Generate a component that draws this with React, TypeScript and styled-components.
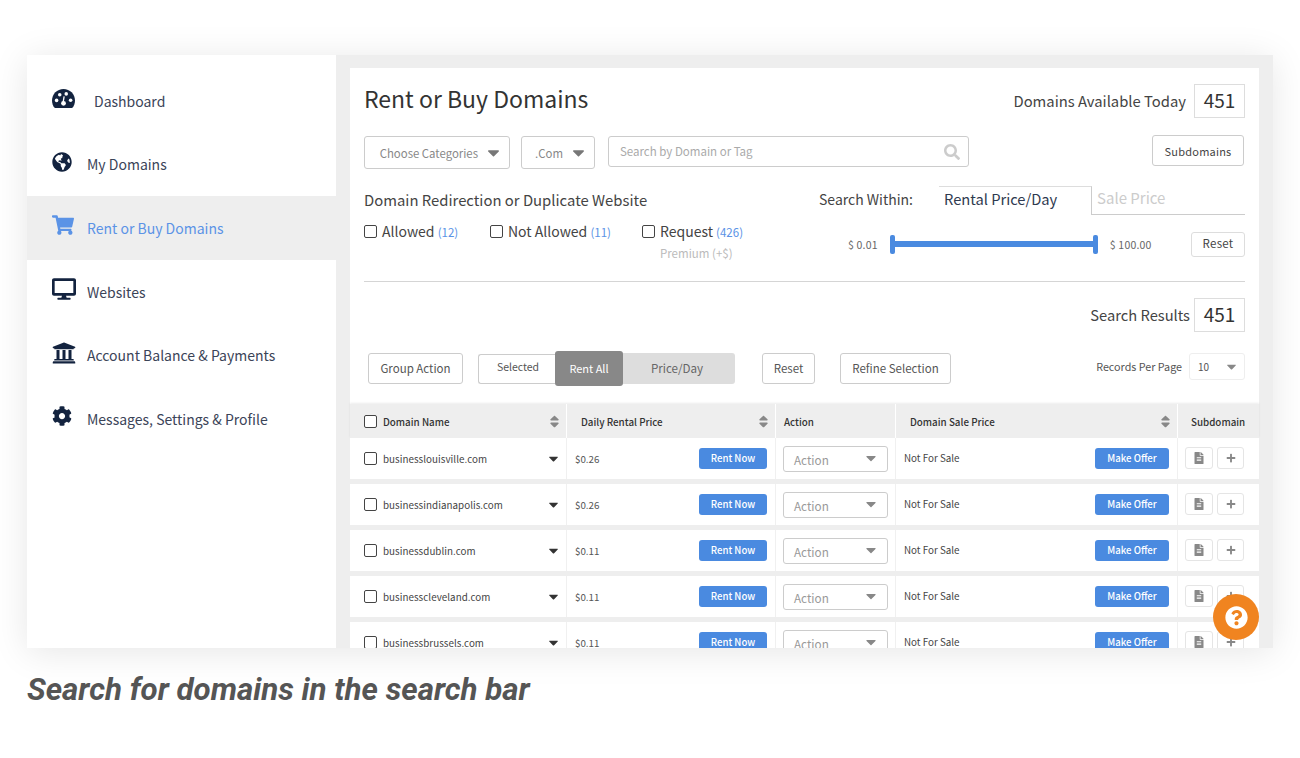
import styled, { createGlobalStyle } from "styled-components";
import {
  FaGlobeAmericas,
  FaShoppingCart,
  FaDesktop,
  FaUniversity,
  FaCog,
  FaSearch,
  FaFileAlt,
  FaPlus,
  FaQuestionCircle,
  FaCaretDown,
  FaSort,
} from "react-icons/fa";

const ui = '"Noto Sans CJK SC", "Open Sans", sans-serif';

const GlobalStyle = createGlobalStyle`
  html, body {
    margin: 0;
    background: #fff;
    overflow: hidden;
  }
  body {
    font-family: ${ui};
    color: #444;
  }
  * { box-sizing: border-box; }
`;

function GaugeIcon() {
  return (
    <svg width="23" height="19" viewBox="0 0 22 18" fill="currentColor">
      <path d="M11 0C4.9 0 0 4.9 0 11c0 2.6.9 5 2.4 6.9.2.1.4.1.6.1h16c.2 0 .4 0 .6-.1C21.1 16 22 13.6 22 11 22 4.9 17.1 0 11 0z" />
      <g fill="#fff">
        <circle cx="4.4" cy="10.8" r="1.7" />
        <circle cx="7.4" cy="5.4" r="1.7" />
        <circle cx="13.6" cy="4.6" r="1.7" />
        <circle cx="17.8" cy="10.6" r="1.7" />
        <circle cx="11" cy="13.6" r="2.3" />
        <path d="M9.9 13.2l1.1-6.4 1.2.2-1 6.4z" />
      </g>
    </svg>
  );
}

const navItems = [
  { label: "Dashboard", icon: <GaugeIcon />, wide: true },
  { label: "My Domains", icon: <FaGlobeAmericas size={20} /> },
  { label: "Rent or Buy Domains", icon: <FaShoppingCart size={22} />, active: true },
  { label: "Websites", icon: <FaDesktop size={24} /> },
  { label: "Account Balance & Payments", icon: <FaUniversity size={24} /> },
  { label: "Messages, Settings & Profile", icon: <FaCog size={20} /> },
];

const domains = [
  { name: "businesslouisville.com", price: "$0.26" },
  { name: "businessindianapolis.com", price: "$0.26" },
  { name: "businessdublin.com", price: "$0.11" },
  { name: "businesscleveland.com", price: "$0.11" },
  { name: "businessbrussels.com", price: "$0.11" },
];

export default function App() {
  return (
    <>
      <GlobalStyle />
      <Page>
        <Frame>
          <Sidebar>
            {navItems.map((item) => (
              <NavRow key={item.label} $active={item.active}>
                <NavIcon $active={item.active}>{item.icon}</NavIcon>
                <NavLabel $wide={item.wide}>{item.label}</NavLabel>
              </NavRow>
            ))}
          </Sidebar>
          <Main>
            <Panel>
              <Body>
                <TitleRow>
                  <Title>Rent or Buy Domains</Title>
                  <CountGroup>
                    <CountLabel>Domains Available Today</CountLabel>
                    <CountBox>451</CountBox>
                  </CountGroup>
                </TitleRow>

                <FilterRow>
                  <FilterSelect $width={146}>
                    Choose Categories <FaCaretDown />
                  </FilterSelect>
                  <FilterSelect $width={74}>
                    .Com <FaCaretDown />
                  </FilterSelect>
                  <SearchBox>
                    Search by Domain or Tag
                    <FaSearch />
                  </SearchBox>
                  <SubdomainsButton>Subdomains</SubdomainsButton>
                </FilterRow>

                <Options>
                  <div>
                    <OptionsTitle>Domain Redirection or Duplicate Website</OptionsTitle>
                    <Checks>
                      <CheckItem $width={126}>
                        <CheckBox />
                        <span>
                          Allowed <Count>(12)</Count>
                        </span>
                      </CheckItem>
                      <CheckItem $width={152}>
                        <CheckBox />
                        <span>
                          Not Allowed <Count>(11)</Count>
                        </span>
                      </CheckItem>
                      <CheckItem>
                        <CheckBox />
                        <span>
                          Request <Count>(426)</Count>
                          <Premium>Premium (+$)</Premium>
                        </span>
                      </CheckItem>
                    </Checks>
                  </div>
                  <div>
                    <Tabs>
                      <WithinLabel>Search Within:</WithinLabel>
                      <ActiveTab>Rental Price/Day</ActiveTab>
                      <IdleTab>Sale Price</IdleTab>
                    </Tabs>
                    <SliderRow>
                      <SliderValue>$ 0.01</SliderValue>
                      <Slider />
                      <SliderValue>$ 100.00</SliderValue>
                      <SmallButton>Reset</SmallButton>
                    </SliderRow>
                  </div>
                </Options>

                <Divider />

                <ResultsRow>
                  <ResultsLabel>Search Results</ResultsLabel>
                  <CountBox>451</CountBox>
                </ResultsRow>

                <Toolbar>
                  <ToolButton $width={95}>Group Action</ToolButton>
                  <Toggle>
                    <ToggleSelected>Selected</ToggleSelected>
                    <ToggleActive>Rent All</ToggleActive>
                    <ToggleRest>Price/Day</ToggleRest>
                  </Toggle>
                  <ToolButton $width={53}>Reset</ToolButton>
                  <ToolButton $width={111}>Refine Selection</ToolButton>
                  <Records>
                    Records Per Page
                    <RecordsSelect>
                      10 <FaCaretDown />
                    </RecordsSelect>
                  </Records>
                </Toolbar>
              </Body>

              <Table>
                <HeadRow>
                  <HeadCell>
                    <CheckBox />
                    <HeadText>Domain Name</HeadText>
                    <SortIcon />
                  </HeadCell>
                  <HeadCell>
                    <HeadText>Daily Rental Price</HeadText>
                    <SortIcon />
                  </HeadCell>
                  <HeadCell $pad={8}>
                    <HeadText>Action</HeadText>
                  </HeadCell>
                  <HeadCell>
                    <HeadText>Domain Sale Price</HeadText>
                    <SortIcon />
                  </HeadCell>
                  <HeadCell $pad={13}>
                    <HeadText>Subdomain</HeadText>
                  </HeadCell>
                </HeadRow>
                {domains.map((d) => (
                  <Row key={d.name}>
                    <Cell>
                      <CheckBox />
                      <DomainName>{d.name}</DomainName>
                      <RowCaret />
                    </Cell>
                    <Cell $pad={8}>
                      <Price>{d.price}</Price>
                      <BlueButton>Rent Now</BlueButton>
                    </Cell>
                    <Cell $pad={7}>
                      <ActionSelect>
                        Action <FaCaretDown />
                      </ActionSelect>
                    </Cell>
                    <Cell $pad={8}>
                      <SaleText>Not For Sale</SaleText>
                      <BlueButton $width={74}>Make Offer</BlueButton>
                    </Cell>
                    <Cell $pad={7}>
                      <IconButton>
                        <FaFileAlt />
                      </IconButton>
                      <IconButton $narrow>
                        <FaPlus />
                      </IconButton>
                    </Cell>
                  </Row>
                ))}
              </Table>
            </Panel>
          </Main>
          <HelpBubble>
            <FaQuestionCircle />
          </HelpBubble>
        </Frame>
        <Caption>Search for domains in the search bar</Caption>
      </Page>
    </>
  );
}

const Page = styled.div`
  width: 1300px;
  height: 758px;
  padding: 55px 27px 0;
`;

const Frame = styled.div`
  position: relative;
  display: flex;
  width: 1246px;
  height: 593px;
  box-shadow: 0 4px 34px rgba(0, 0, 0, 0.1);
`;

const Sidebar = styled.nav`
  width: 309px;
  flex-shrink: 0;
  padding-top: 14px;
  background: #fff;
`;

const NavRow = styled.div<{ $active?: boolean }>`
  display: flex;
  align-items: center;
  height: 63.6px;
  padding-left: 25px;
  background: ${(p) => (p.$active ? "#eeeeee" : "transparent")};
  color: ${(p) => (p.$active ? "#5b93e6" : "#3b4458")};
`;

const NavIcon = styled.span<{ $active?: boolean }>`
  display: flex;
  width: 35px;
  margin-top: -5px;
  color: ${(p) => (p.$active ? "#5b93e6" : "#13233f")};
  svg {
    display: block;
  }
`;

const NavLabel = styled.span<{ $wide?: boolean }>`
  font-size: 14px;
  margin-left: ${(p) => (p.$wide ? "7px" : "0")};
`;

const Main = styled.div`
  flex: 1;
  height: 100%;
  padding: 13px 14px 0;
  background: #eeeeee;
  overflow: hidden;
`;

const Panel = styled.div`
  width: 909px;
  min-height: 640px;
  background: #fff;
`;

const Body = styled.div`
  padding: 16px 14px 0;
`;

const TitleRow = styled.div`
  display: flex;
  justify-content: space-between;
  align-items: center;
  height: 33px;
`;

const Title = styled.h1`
  margin: -5px 0 0;
  font-size: 23px;
  font-weight: 400;
  color: #333;
`;

const CountGroup = styled.div`
  display: flex;
  align-items: center;
  gap: 8px;
`;

const CountLabel = styled.span`
  font-size: 14.8px;
  color: #444;
`;

const CountBox = styled.div`
  display: flex;
  align-items: center;
  justify-content: center;
  width: 51px;
  height: 34px;
  padding-bottom: 3px;
  border: 1px solid #ddd;
  font-size: 19px;
  color: #333;
`;

const FilterRow = styled.div`
  display: flex;
  align-items: flex-start;
  margin-top: 18px;
`;

const FilterSelect = styled.div<{ $width: number }>`
  display: flex;
  align-items: center;
  justify-content: flex-end;
  gap: 6px;
  width: ${(p) => p.$width}px;
  height: 33px;
  margin-top: 1px;
  margin-right: 11px;
  padding-right: 6px;
  border: 1px solid #ccc;
  border-radius: 3px;
  font-size: 11.4px;
  color: #888;
  svg {
    font-size: 19px;
    color: #777;
  }
`;

const SearchBox = styled.div`
  display: flex;
  align-items: center;
  justify-content: space-between;
  width: 361px;
  height: 31px;
  margin-top: 1px;
  margin-left: 2px;
  padding: 0 8px 2px 11px;
  border: 1px solid #ccc;
  border-radius: 3px;
  font-size: 11.5px;
  color: #aaa;
  svg {
    font-size: 16px;
    margin-top: 2px;
    color: #ccc;
  }
`;

const SubdomainsButton = styled.div`
  display: flex;
  align-items: center;
  justify-content: center;
  width: 92px;
  height: 31px;
  margin-left: auto;
  margin-right: 1px;
  border: 1px solid #ccc;
  border-radius: 3px;
  font-size: 11px;
  letter-spacing: 0.2px;
  color: #444;
`;

const Options = styled.div`
  display: grid;
  grid-template-columns: 455px 426px;
  height: 95px;
  margin-top: 17px;
`;

const OptionsTitle = styled.div`
  margin-top: 2px;
  font-size: 14.85px;
  line-height: 24px;
  color: #444;
`;

const Checks = styled.div`
  display: flex;
  margin-top: 9px;
`;

const CheckItem = styled.div<{ $width?: number }>`
  display: flex;
  align-items: flex-start;
  gap: 5px;
  width: ${(p) => (p.$width ? `${p.$width}px` : "auto")};
  font-size: 14px;
  line-height: 20px;
  color: #444;
  > div {
    margin-top: 4px;
  }
`;

const CheckBox = styled.div`
  flex-shrink: 0;
  width: 13px;
  height: 13px;
  border: 1.5px solid #444;
  border-radius: 2px;
  background: #fff;
`;

const Count = styled.span`
  font-size: 11.5px;
  color: #5b93e6;
`;

const Premium = styled.div`
  font-size: 11.5px;
  line-height: 22px;
  color: #bbb;
`;

const Tabs = styled.div`
  display: flex;
  align-items: stretch;
  height: 29px;
`;

const WithinLabel = styled.div`
  width: 120px;
  padding-top: 3px;
  font-size: 14px;
  color: #444;
`;

const ActiveTab = styled.div`
  width: 153px;
  padding: 1px 0 0 5px;
  border-top: 1px solid #ddd;
  border-right: 1px solid #ccc;
  font-size: 14.7px;
  color: #2f3a50;
`;

const IdleTab = styled.div`
  flex: 1;
  padding: 1px 0 0 5px;
  border-bottom: 1px solid #ccc;
  font-size: 15px;
  color: #ccc;
`;

const SliderRow = styled.div`
  display: flex;
  align-items: center;
  height: 26px;
  margin-top: 16px;
  padding-left: 29px;
`;

const SliderValue = styled.span`
  font-size: 10.5px;
  letter-spacing: 0.2px;
  color: #666;
`;

const Slider = styled.div`
  position: relative;
  width: 208px;
  height: 6px;
  margin: 0 12px;
  background: #4a8ae0;
  &::before,
  &::after {
    content: "";
    position: absolute;
    top: -6px;
    width: 5px;
    height: 19px;
    border-radius: 2px;
    background: #4a8ae0;
  }
  &::before {
    left: 0;
  }
  &::after {
    right: 0;
  }
`;

const SmallButton = styled.div`
  display: flex;
  align-items: center;
  justify-content: center;
  width: 54px;
  height: 25px;
  margin-left: auto;
  padding-bottom: 2px;
  border: 1px solid #ddd;
  border-radius: 3px;
  font-size: 11.5px;
  letter-spacing: 0.3px;
  color: #444;
`;

const Divider = styled.div`
  height: 1px;
  background: #d5d5d5;
`;

const ResultsRow = styled.div`
  display: flex;
  justify-content: flex-end;
  align-items: center;
  gap: 4px;
  margin-top: 16px;
`;

const ResultsLabel = styled.span`
  margin-top: -2px;
  font-size: 14.7px;
  color: #444;
`;

const Toolbar = styled.div`
  display: flex;
  align-items: center;
  height: 35px;
  margin-top: 19px;
  padding-left: 4px;
`;

const ToolButton = styled.div<{ $width: number }>`
  display: flex;
  align-items: center;
  justify-content: center;
  width: ${(p) => p.$width}px;
  height: 31px;
  margin-right: 25px;
  padding-bottom: 1px;
  border: 1px solid #ccc;
  border-radius: 3px;
  font-size: 11.5px;
  color: #555;
  &:first-child {
    margin-right: 15px;
  }
`;

const Toggle = styled.div`
  display: flex;
  align-items: center;
  margin-right: 27px;
`;

const ToggleSelected = styled.div`
  display: flex;
  align-items: center;
  justify-content: center;
  width: 77px;
  height: 30px;
  padding: 0 0 4px 2px;
  border: 1px solid #ccc;
  border-right: 0;
  border-radius: 3px 0 0 3px;
  font-size: 10.5px;
  color: #555;
`;

const ToggleActive = styled.div`
  display: flex;
  align-items: center;
  justify-content: center;
  width: 68px;
  height: 35px;
  padding-bottom: 1px;
  border-radius: 3px;
  background: #888888;
  font-size: 11px;
  color: #fff;
`;

const ToggleRest = styled.div`
  display: flex;
  align-items: center;
  justify-content: center;
  width: 112px;
  height: 31px;
  padding: 0 4px 1px 0;
  border-radius: 0 3px 3px 0;
  background: #dddddd;
  font-size: 11.6px;
  color: #666;
`;

const Records = styled.div`
  display: flex;
  align-items: center;
  gap: 7px;
  margin-left: auto;
  margin-top: -4px;
  font-size: 10.75px;
  color: #555;
`;

const RecordsSelect = styled.div`
  display: flex;
  align-items: center;
  justify-content: space-between;
  width: 56px;
  height: 27px;
  padding: 0 5px 0 8px;
  border: 1px solid #eee;
  border-radius: 3px;
  font-size: 10px;
  color: #555;
  svg {
    font-size: 15px;
    color: #888;
  }
`;

const Table = styled.div`
  margin-top: 18px;
`;

const columns = "217px 209px 120px 282px 81px";

const HeadRow = styled.div`
  display: grid;
  grid-template-columns: ${columns};
  height: 34px;
  box-shadow: 0 -1px 2px rgba(0, 0, 0, 0.08);
`;

const HeadCell = styled.div<{ $pad?: number }>`
  display: flex;
  align-items: center;
  gap: 6px;
  padding: 1px 4px 0 ${(p) => p.$pad ?? 14}px;
  background: #eeeeee;
  border-right: 1px solid #fff;
  &:last-child {
    border-right: 0;
  }
`;

const HeadText = styled.span`
  flex: 1;
  font-size: 9.8px;
  font-weight: 500;
  color: #333;
`;

const SortIcon = styled(FaSort)`
  font-size: 15px;
  color: #888;
`;

const Row = styled.div`
  display: grid;
  grid-template-columns: ${columns};
  height: 41px;
  margin-bottom: 5px;
  background: #fff;
  box-shadow: 0 5px 0 #eeeeee;
`;

const Cell = styled.div<{ $pad?: number }>`
  display: flex;
  align-items: center;
  gap: 6px;
  padding: 0 7px 0 ${(p) => p.$pad ?? 14}px;
  border-right: 1px solid #f0f0f0;
  &:last-child {
    border-right: 0;
  }
`;

const DomainName = styled.span`
  flex: 1;
  font-size: 9.8px;
  letter-spacing: 0.05px;
  color: #444;
`;

const RowCaret = styled(FaCaretDown)`
  margin-right: -2px;
  font-size: 15px;
  color: #333;
`;

const Price = styled.span`
  flex: 1;
  font-size: 9.8px;
  color: #555;
`;

const SaleText = styled.span`
  flex: 1;
  margin-top: -2px;
  font-size: 9.8px;
  color: #444;
`;

const BlueButton = styled.div<{ $width?: number }>`
  display: flex;
  align-items: center;
  justify-content: center;
  width: ${(p) => p.$width ?? 68}px;
  height: 21px;
  margin-top: -1px;
  margin-right: 1px;
  border-radius: 3px;
  background: #4a8ae0;
  font-size: 9.6px;
  font-weight: 500;
  color: #fff;
`;

const ActionSelect = styled.div`
  display: flex;
  align-items: center;
  justify-content: space-between;
  flex-shrink: 0;
  width: 105px;
  height: 26px;
  margin-top: 1px;
  padding: 0 8px 0 10px;
  border: 1px solid #ccc;
  border-radius: 3px;
  font-size: 11.7px;
  color: #999;
  svg {
    font-size: 16px;
    margin-top: -3px;
    color: #888;
  }
`;

const IconButton = styled.div<{ $narrow?: boolean }>`
  display: flex;
  align-items: center;
  justify-content: center;
  flex-shrink: 0;
  width: ${(p) => (p.$narrow ? 27 : 28)}px;
  height: 22px;
  margin-top: -1px;
  margin-right: -2px;
  border: 1px solid #e5e5e5;
  border-radius: 3px;
  font-size: ${(p) => (p.$narrow ? 10 : 12)}px;
  color: #888;
`;

const HelpBubble = styled.div`
  position: absolute;
  right: 14px;
  top: 539px;
  display: flex;
  align-items: center;
  justify-content: center;
  width: 46px;
  height: 46px;
  border-radius: 50%;
  background: #f08420;
  font-size: 23px;
  color: #fff;
`;

const Caption = styled.div`
  margin-top: 23px;
  font-family: Roboto, sans-serif;
  font-size: 31.3px;
  line-height: 38px;
  font-style: italic;
  font-weight: 700;
  color: #555;
`;
